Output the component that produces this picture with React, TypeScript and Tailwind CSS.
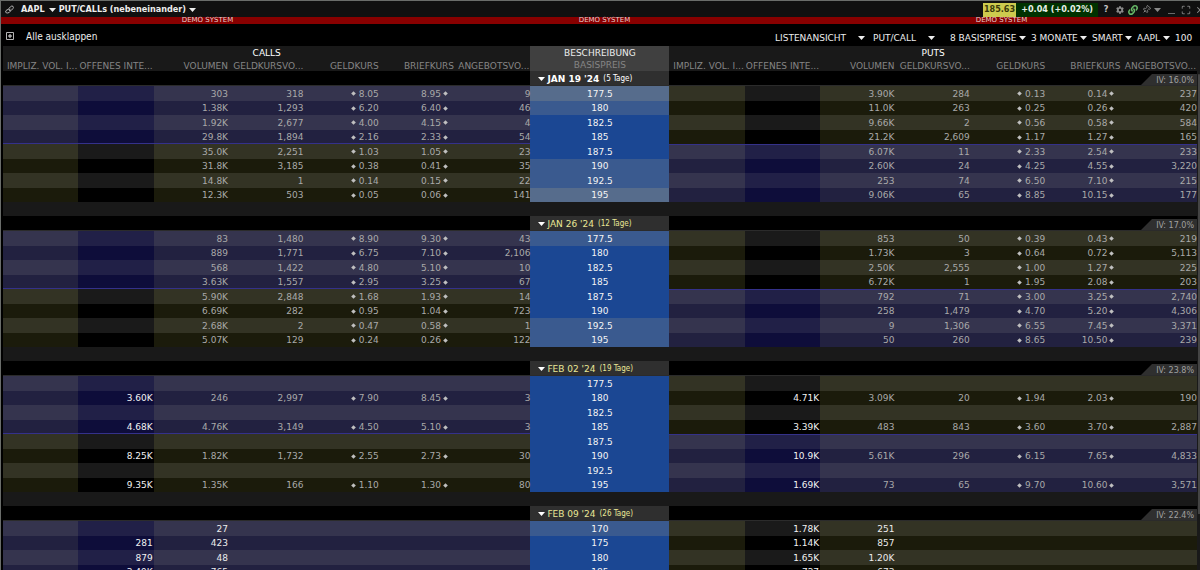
import React from 'react';
import { Pin, Maximize, X } from 'lucide-react';
import { FaCog, FaLink } from 'react-icons/fa';

type Quote = [oi: string, volume: string, bidSize: string, bid: string, ask: string, askSize: string];
type Tone = 'deep' | 'mid' | 'pale';
type Strike = { strike: string; tone: Tone; call: Quote; put: Quote };
type Expiry = { date: string; days: string; iv: string; active?: boolean; bright?: boolean; rows: Strike[] };

const none: Quote = ['', '', '', '', '', ''];
const row = (strike: string, tone: Tone, call: Quote, put: Quote): Strike => ({ strike, tone, call, put });

const expiries: Expiry[] = [
  {
    date: "JAN 19 '24", days: '(5 Tage)', iv: 'IV: 16.0%', active: true,
    rows: [
      row('177.5', 'pale', ['', '303', '318', '8.05', '8.95', '9'], ['', '3.90K', '284', '0.13', '0.14', '237']),
      row('180', 'mid', ['', '1.38K', '1,293', '6.20', '6.40', '46'], ['', '11.0K', '263', '0.25', '0.26', '420']),
      row('182.5', 'deep', ['', '1.92K', '2,677', '4.00', '4.15', '4'], ['', '9.66K', '2', '0.56', '0.58', '584']),
      row('185', 'deep', ['', '29.8K', '1,894', '2.16', '2.33', '54'], ['', '21.2K', '2,609', '1.17', '1.27', '165']),
      row('187.5', 'deep', ['', '35.0K', '2,251', '1.03', '1.05', '23'], ['', '6.07K', '11', '2.33', '2.54', '233']),
      row('190', 'mid', ['', '31.8K', '3,185', '0.38', '0.41', '35'], ['', '2.60K', '24', '4.25', '4.55', '3,220']),
      row('192.5', 'mid', ['', '14.8K', '1', '0.14', '0.15', '22'], ['', '253', '74', '6.50', '7.10', '215']),
      row('195', 'pale', ['', '12.3K', '503', '0.05', '0.06', '141'], ['', '9.06K', '65', '8.85', '10.15', '177']),
    ],
  },
  {
    date: "JAN 26 '24", days: '(12 Tage)', iv: 'IV: 17.0%',
    rows: [
      row('177.5', 'mid', ['', '83', '1,480', '8.90', '9.30', '43'], ['', '853', '50', '0.39', '0.43', '219']),
      row('180', 'deep', ['', '889', '1,771', '6.75', '7.10', '2,106'], ['', '1.73K', '3', '0.64', '0.72', '5,113']),
      row('182.5', 'deep', ['', '568', '1,422', '4.80', '5.10', '10'], ['', '2.50K', '2,555', '1.00', '1.27', '225']),
      row('185', 'deep', ['', '3.63K', '1,557', '2.95', '3.25', '67'], ['', '6.72K', '1', '1.95', '2.08', '203']),
      row('187.5', 'deep', ['', '5.90K', '2,848', '1.68', '1.93', '14'], ['', '792', '71', '3.00', '3.25', '2,740']),
      row('190', 'deep', ['', '6.69K', '282', '0.95', '1.04', '723'], ['', '258', '1,479', '4.70', '5.20', '4,306']),
      row('192.5', 'mid', ['', '2.68K', '2', '0.47', '0.58', '1'], ['', '9', '1,306', '6.55', '7.45', '3,371']),
      row('195', 'mid', ['', '5.07K', '129', '0.24', '0.26', '122'], ['', '50', '260', '8.65', '10.50', '239']),
    ],
  },
  {
    date: "FEB 02 '24", days: '(19 Tage)', iv: 'IV: 23.8%',
    rows: [
      row('177.5', 'deep', none, none),
      row('180', 'deep', ['3.60K', '246', '2,997', '7.90', '8.45', '3'], ['4.71K', '3.09K', '20', '1.94', '2.03', '190']),
      row('182.5', 'deep', none, none),
      row('185', 'deep', ['4.68K', '4.76K', '3,149', '4.50', '5.10', '3'], ['3.39K', '483', '843', '3.60', '3.70', '2,887']),
      row('187.5', 'deep', none, none),
      row('190', 'deep', ['8.25K', '1.82K', '1,732', '2.55', '2.73', '30'], ['10.9K', '5.61K', '296', '6.15', '7.65', '4,833']),
      row('192.5', 'deep', none, none),
      row('195', 'deep', ['9.35K', '1.35K', '166', '1.10', '1.30', '80'], ['1.69K', '73', '65', '9.70', '10.60', '3,571']),
    ],
  },
  {
    date: "FEB 09 '24", days: '(26 Tage)', iv: 'IV: 22.4%', bright: true,
    rows: [
      row('170', 'mid', ['', '27', '', '', '', ''], ['1.78K', '251', '', '', '', '']),
      row('175', 'deep', ['281', '423', '', '', '', ''], ['1.14K', '857', '', '', '', '']),
      row('180', 'deep', ['879', '48', '', '', '', ''], ['1.65K', '1.20K', '', '', '', '']),
      row('185', 'deep', ['3.49K', '765', '', '', '', ''], ['727', '673', '', '', '', '']),
    ],
  },
];

const toneClass: Record<Tone, string> = {
  deep: 'bg-[#1b4793]',
  mid: 'bg-[#3a5a8f]',
  pale: 'bg-[#566c8c]',
};

const columns = ['IMPLIZ. VOL. I...', 'OFFENES INTE...', 'VOLUMEN', 'GELDKURSVO...', 'GELDKURS', 'BRIEFKURS', 'ANGEBOTSVO...'];

function Caret({ className = '' }: { className?: string }) {
  return (
    <svg viewBox="0 0 7 4" className={`pointer-events-none h-1 w-[7px] shrink-0 ${className}`} aria-hidden="true">
      <path d="M0 0h7L3.5 4z" fill="currentColor" />
    </svg>
  );
}

function Dot() {
  return (
    <svg viewBox="0 0 5 5" className="size-[5px] shrink-0 text-[#c0c0c0]" aria-hidden="true">
      <path d="M2.5 .2L4.8 2.5L2.5 4.8L.2 2.5z" fill="currentColor" />
    </svg>
  );
}

function QuoteCells({ quote, itm, light, line, bright }: {
  quote: Quote; itm: boolean; light: boolean; line: '' | 'top' | 'bottom'; bright?: boolean;
}) {
  const [oi, volume, bidSize, bid, ask, askSize] = quote;
  const base = itm ? (light ? 'bg-[#35344e]' : 'bg-[#222140]') : light ? 'bg-[#333324]' : 'bg-[#1b1b0b]';
  const oiBg = itm ? (light ? 'bg-[#212047]' : 'bg-[#0e0d3a]') : light ? 'bg-[#1a1a1a]' : 'bg-black';
  const edge = line === 'bottom' ? 'shadow-[inset_0_-1px_#34318a]' : line === 'top' ? 'shadow-[inset_0_1px_#34318a]' : '';
  const text = bright ? 'text-[#ececec]' : 'text-[#a9a9a9]';
  const cell = `${base} ${edge} ${text} p-0 pr-px text-right`;
  return (
    <>
      <td className={cell} />
      <td className={`${oiBg} ${edge} p-0 pr-px text-right text-[#f2f2f2]`}>{oi}</td>
      <td className={cell}>{volume}</td>
      <td className={cell}>{bidSize}</td>
      <td className={cell}>
        {bid && <span className="flex items-center justify-end gap-[3px]"><Dot />{bid}</span>}
      </td>
      <td className={cell}>
        {ask && <span className="flex items-center justify-end gap-0.5 pr-1.5">{ask}<Dot /></span>}
      </td>
      <td className={`${base} ${edge} ${text} p-0 text-right`}>{askSize}</td>
    </>
  );
}

function ExpiryGroup({ expiry }: { expiry: Expiry }) {
  return (
    <tbody>
      <tr className="h-[15px]">
        <td colSpan={7} className="border-b border-[#2b2b2b] bg-black p-0" />
        <th scope="rowgroup" className="border-b border-[#2b2b2b] bg-[#2f2f2f] p-0 text-left font-normal">
          <button type="button" className={`flex h-3.5 items-center gap-0.5 pt-0.5 pl-2 leading-3 ${expiry.active ? 'font-bold text-white' : 'text-[#e9e796]'}`}>
            <Caret className="text-white" />
            {expiry.date}
            <span className="ml-0.5 font-['DejaVu_Sans_Condensed','DejaVu_Sans',sans-serif] text-[8px] font-normal">{expiry.days}</span>
          </button>
        </th>
        <td colSpan={7} className="border-b border-[#2b2b2b] bg-black p-0 align-bottom">
          <div className="ml-auto h-[11px] w-14 bg-[#2f2f2f] pr-[3px] text-right text-[8px] leading-[14px] text-[#a0a0a0] [clip-path:polygon(11px_0,100%_0,100%_100%,0_100%)]">
            {expiry.iv}
          </div>
        </td>
      </tr>
      {expiry.rows.map((r, i) => {
        const light = i % 2 === 0;
        const callItm = i < 4;
        return (
          <tr key={r.strike} className={light ? 'h-[15px]' : 'h-3.5'}>
            <QuoteCells quote={r.call} itm={callItm} light={light} line={i === 3 ? 'bottom' : ''} bright={expiry.bright} />
            <th scope="row" className={`${toneClass[r.tone]} p-0 text-center font-normal text-[#f4f4f4]`}>{r.strike}</th>
            <QuoteCells quote={r.put} itm={!callItm} light={light} line={i === 4 ? 'top' : ''} bright={expiry.bright} />
          </tr>
        );
      })}
      <tr className="h-3.5">
        <td colSpan={15} className="bg-[#191919] p-0" />
      </tr>
    </tbody>
  );
}

function Picker({ label, value, wide }: { label: string; value: string; wide?: boolean }) {
  return (
    <span className={`flex items-center ${wide ? 'gap-[11px]' : 'gap-0.5'}`}>
      <select aria-label={label} defaultValue={value} className="appearance-none bg-black p-0 leading-3 text-[#ededed] outline-none">
        <option>{value}</option>
      </select>
      <Caret />
    </span>
  );
}

export default function App() {
  return (
    <div className="flex h-screen flex-col overflow-hidden border-t border-l border-[#6a6d6a] bg-black font-['DejaVu_Sans',Verdana,sans-serif] text-[9px] text-[#ededed]">
      <header className="flex h-4 shrink-0 items-center bg-[#101010] pt-px pl-1 font-['DejaVu_Sans_Condensed','DejaVu_Sans',sans-serif] font-bold">
        <svg viewBox="0 0 10 10" className="mr-[7px] size-[9px] text-[#b5b5b5]" fill="none" stroke="currentColor" strokeWidth="1.1" aria-hidden="true">
          <path d="M3.4 5L6 2Q7.600 .5 8.900 1.500Q9.800 2.600 8.800 4L7.200 5.800Q5.800 6.800 4.600 6" />
          <path d="M6.400 4.200Q5.600 5.400 4.400 5.400M4 5Q2 5 1 6.400Q.2 8 1.400 8.700Q3 9.300 4.800 8.200Q5.800 7.400 6 6.400" />
        </svg>
        <button type="button" className="flex items-center gap-1">AAPL<Caret /></button>
        <button type="button" className="ml-[3px] flex items-center gap-[3px]">PUT/CALLs (nebeneinander)<Caret /></button>
        <div className="ml-auto flex h-3.5 items-center">
          <span className="flex h-full items-center bg-[#cdcb4e] px-px text-[#39390a]">185.63</span>
          <span className="flex h-full items-center bg-[#003200] px-[5px] text-[#e8efe8]">+0.04 (+0.02%)</span>
        </div>
        <div className="flex items-center text-[#8a8a8a]">
          <button type="button" aria-label="Hilfe" className="ml-1 w-2 text-[#c4c4c4]">?</button>
          <button type="button" aria-label="Einstellungen" className="ml-1.5"><FaCog className="size-2" /></button>
          <button type="button" aria-label="Verknüpfen" className="ml-1 text-[#67b867]"><FaLink className="size-[10px]" /></button>
          <button type="button" aria-label="Anheften" className="ml-1"><Pin className="size-[9px] rotate-45" strokeWidth={2.5} /></button>
          <button type="button" aria-label="Fenstermenü" className="ml-[3px]"><Caret /></button>
          <button type="button" aria-label="Minimieren" className="ml-[7px] flex h-2 items-end">
            <span className="block h-px w-[7px] bg-[#6a6a6a]" />
          </button>
          <button type="button" aria-label="Maximieren" className="ml-1.5"><Maximize className="size-[10px] text-[#777]" strokeWidth={2.5} /></button>
          <button type="button" aria-label="Schließen" className="ml-1 w-[5px] overflow-hidden"><X className="size-[10px]" strokeWidth={2.5} /></button>
        </div>
      </header>

      <div className="grid h-[7px] shrink-0 grid-cols-3 bg-[#880000] pl-2 text-center text-[7px] leading-[7px] text-[#e6cccc]">
        <span>DEMO SYSTEM</span>
        <span>DEMO SYSTEM</span>
        <span>DEMO SYSTEM</span>
      </div>

      <div className="flex h-[22px] shrink-0 items-center pr-[7px] pl-[5px]">
        <button type="button" className="flex items-center gap-3 pt-0.5 font-['DejaVu_Sans_Condensed','DejaVu_Sans',sans-serif] text-[10px]">
          <svg viewBox="0 0 8 8" className="size-2" fill="none" stroke="#b4b4b4" aria-hidden="true">
            <path d="M.5 .5h7v7h-7z" />
            <path d="M2 4h4M4 2v4" stroke="#e4e4e4" />
          </svg>
          Alle ausklappen
        </button>
        <div className="ml-auto flex items-center pt-[5px]">
          <div className="mr-[15px] flex items-center gap-2">
            <Picker label="Ansicht" value="LISTENANSICHT" wide />
            <Picker label="Typ" value="PUT/CALL" wide />
          </div>
          <div className="flex items-center gap-[5px]">
            <Picker label="Basispreise" value="8 BASISPREISE" />
            <Picker label="Zeitraum" value="3 MONATE" />
            <Picker label="Börse" value="SMART" />
            <Picker label="Klasse" value="AAPL" />
            <input aria-label="Multiplikator" defaultValue="100" className="w-[18px] bg-transparent p-0 leading-3 outline-none" />
          </div>
        </div>
      </div>

      <main className="flex min-h-0 flex-1 overflow-hidden pl-0.5">
        <div className="min-w-0 flex-1">
          <table className="w-full table-fixed border-separate border-spacing-0 leading-[14px] whitespace-nowrap">
            <colgroup>
              <col span={7} />
              <col className="w-[139px]" />
              <col span={7} />
            </colgroup>
            <thead className="bg-[#191919]">
              <tr className="h-[15px] leading-[15px]">
                <th colSpan={7} scope="colgroup" className="p-0 text-center font-normal text-white">CALLS</th>
                <th scope="col" className="bg-[#404040] p-0 text-center font-normal text-[#ededed]">BESCHREIBUNG</th>
                <th colSpan={7} scope="colgroup" className="p-0 text-center font-normal text-white">PUTS</th>
              </tr>
              <tr className="h-[10px] text-[#858585]">
                {columns.map((c) => <th key={`call-${c}`} scope="col" className="p-0 pr-px text-right leading-[10px] font-normal">{c}</th>)}
                <th scope="col" className="bg-[#404040] p-0 text-center align-top leading-[8px] font-normal">BASISPREIS</th>
                {columns.map((c) => <th key={`put-${c}`} scope="col" className="p-0 pr-px text-right leading-[10px] font-normal">{c}</th>)}
              </tr>
            </thead>
            {expiries.map((e) => <ExpiryGroup key={e.date} expiry={e} />)}
          </table>
        </div>
        <div className="w-[3px] shrink-0 bg-[#191919] pt-7" aria-hidden="true">
          <div className="ml-px h-110 rounded-t bg-[#444]" />
        </div>
      </main>
    </div>
  );
}
